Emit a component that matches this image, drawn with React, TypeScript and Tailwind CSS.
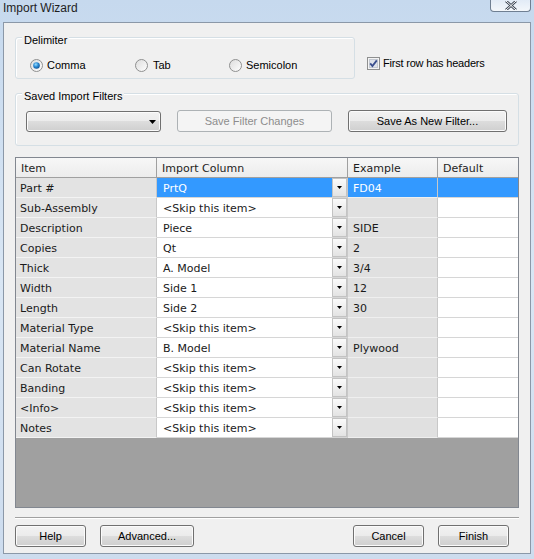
import React from "react";

const dlg = "font-['Liberation_Sans',Arial,sans-serif] text-[11px]";
const grid = "font-['DejaVu_Sans',Verdana,sans-serif] text-[11px]";

const rows: [string, string, string][] = [
    ["Part #", "PrtQ", "FD04"],
    ["Sub-Assembly", "<Skip this item>", ""],
    ["Description", "Piece", "SIDE"],
    ["Copies", "Qt", "2"],
    ["Thick", "A. Model", "3/4"],
    ["Width", "Side 1", "12"],
    ["Length", "Side 2", "30"],
    ["Material Type", "<Skip this item>", ""],
    ["Material Name", "B. Model", "Plywood"],
    ["Can Rotate", "<Skip this item>", ""],
    ["Banding", "<Skip this item>", ""],
    ["<Info>", "<Skip this item>", ""],
    ["Notes", "<Skip this item>", ""],
];

const btn =
    "flex items-center justify-center rounded-[3px] border border-[#707070] bg-[linear-gradient(#f2f2f2,#ebebeb_50%,#dddddd_50%,#cfcfcf)] shadow-[inset_0_0_0_1px_#fbfbfb] text-black";

function Radio({ checked }: { checked?: boolean }) {
    return (
        <svg width="13" height="13" viewBox="0 0 13 13">
            <defs>
                <linearGradient id="rb" x1="0" y1="0" x2="1" y2="1">
                    <stop offset="0" stopColor="#dcdcdc" />
                    <stop offset="1" stopColor="#ffffff" />
                </linearGradient>
                <radialGradient id="rd" cx="0.4" cy="0.35" r="0.7">
                    <stop offset="0" stopColor="#9be0ff" />
                    <stop offset="0.5" stopColor="#2a8ad4" />
                    <stop offset="1" stopColor="#0f4f8f" />
                </radialGradient>
            </defs>
            <circle cx="6.5" cy="6.5" r="6" fill="url(#rb)" stroke="#8e8f8f" />
            {checked && <circle cx="6.5" cy="6.5" r="3.3" fill="url(#rd)" />}
        </svg>
    );
}

function Check() {
    return (
        <svg width="13" height="13" viewBox="0 0 13 13">
            <rect x="0.5" y="0.5" width="12" height="12" fill="#f4f4f4" stroke="#8e8f8f" />
            <rect x="2.5" y="2.5" width="8" height="8" fill="#dfe3ea" stroke="#c4c9d2" />
            <path d="M3.2 6.4 L5.4 9 L9.8 3.4" fill="none" stroke="#3b4f8e" strokeWidth="1.8" />
        </svg>
    );
}

function Arrow() {
    return (
        <svg width="7" height="4" viewBox="0 0 7 4">
            <path d="M0 0 H7 L3.5 4 Z" fill="#000" />
        </svg>
    );
}

function DropBtn() {
    return (
        <div className="flex w-[15px] self-stretch items-center justify-center border border-[#c3c3c3] bg-linear-to-b from-[#fbfbfb] to-[#e3e3e3]">
            <svg width="5" height="3" viewBox="0 0 5 3">
                <path d="M0 0 H5 L2.5 3 Z" fill="#000" />
            </svg>
        </div>
    );
}

function Group({ label, className, children }: { label: string; className: string; children: React.ReactNode }) {
    return (
        <div className={`relative rounded-[3px] border border-[#d5dfe5] shadow-[inset_1px_1px_0_#ffffff] ${className}`}>
            <span className="absolute left-[6px] top-[-4px] bg-[#f0f0f0] px-[2px] leading-[13px] text-black">{label}</span>
            {children}
        </div>
    );
}

export default function App() {
    return (
        <div className={`flex h-[559px] w-[534px] flex-col bg-linear-to-b from-[#c6d9ee] via-[#d9e6f4] to-[#cddcee] ${dlg}`}>
            <div className="flex h-[22px] items-start justify-between pl-[3px]">
                <span className="text-[12px] leading-[16px] text-[#1e1e1e]">Import Wizard</span>
                <div className="mr-[3px] flex h-[12px] w-[41px] items-end justify-center rounded-b-[4px] border border-t-0 border-[#6f7f92] bg-linear-to-b from-[#e2ebf6] to-[#f3f7fb] pb-[1px]">
                    <svg width="12" height="9" viewBox="0 0 12 9">
                        <path d="M1 0 L11 9 M11 0 L1 9" stroke="#3c4654" strokeWidth="2.6" />
                        <path d="M1 0 L11 9 M11 0 L1 9" stroke="#ffffff" strokeWidth="1" />
                    </svg>
                </div>
            </div>

            <div className="mx-[3px] mb-[5px] flex flex-1 flex-col border border-[#8b98a8] bg-[#f0f0f0] px-[11px] pt-[14px]">
                <div className="flex items-start">
                    <Group label="Delimiter" className="h-[42px] w-[340px]">
                        <div className="flex items-center pl-[14px] pt-[21px] leading-[13px]">
                            <div className="flex w-[105px] items-center gap-[4px]">
                                <Radio checked />
                                <span>Comma</span>
                            </div>
                            <div className="flex w-[94px] items-center gap-[5px]">
                                <Radio />
                                <span>Tab</span>
                            </div>
                            <div className="flex items-center gap-[4px]">
                                <Radio />
                                <span>Semicolon</span>
                            </div>
                        </div>
                    </Group>
                    <div className="ml-[12px] mt-[20px] flex items-center gap-[3px] leading-[13px]">
                        <Check />
                        <span className="tracking-[-0.2px]">First row has headers</span>
                    </div>
                </div>

                <Group label="Saved Import Filters" className="mt-[14px] h-[53px] w-full">
                    <div className="flex items-start pl-[10px] pt-[16px]">
                        <div className={`${btn} mt-[1px] h-[21px] w-[135px] justify-end pr-[4px]`}>
                            <Arrow />
                        </div>
                        <div className="ml-[16px] flex h-[22px] w-[155px] items-center justify-center rounded-[3px] border border-[#adb2b5] bg-[#f4f4f4] text-[#8d8d8d]">
                            Save Filter Changes
                        </div>
                        <div className={`${btn} ml-[16px] h-[22px] w-[159px]`}>Save As New Filter...</div>
                    </div>
                </Group>

                <div className={`mt-[11px] flex h-[351px] flex-col border border-[#828790] bg-[#a0a0a0] ${grid}`}>
                    <div className="grid grid-cols-[141px_191px_90px_80px] text-[#1e1e1e]">
                        {["Item", "Import Column", "Example", "Default"].map((h, i) => (
                            <div
                                key={h}
                                className={`flex h-[20px] items-center border-b border-[#a0a0a0] bg-linear-to-b from-[#f7f7f7] to-[#ececec] pl-[5px] pt-[4px] ${
                                    i < 3 ? "border-r" : ""
                                }`}
                            >
                                {h}
                            </div>
                        ))}
                        {rows.map(([item, col, ex], r) => {
                            const sel = r === 0;
                            return (
                                <React.Fragment key={item}>
                                    <div className="flex h-[20px] items-center border-b border-r border-b-[#f3f3f3] border-r-[#c8c8c8] bg-[#e3e3e3] pl-[4px] pt-[4px] text-[#1a1a1a]">
                                        {item}
                                    </div>
                                    <div
                                        className={`flex h-[20px] items-stretch justify-between border-b border-r border-b-[#d6d6d6] border-r-[#c8c8c8] ${
                                            sel ? "bg-[#3399ff] text-white" : "bg-white text-[#1a1a1a]"
                                        }`}
                                    >
                                        <span className="flex items-center pl-[6px] pt-[4px]">{col}</span>
                                        <DropBtn />
                                    </div>
                                    <div
                                        className={`flex h-[20px] items-center border-b border-r border-b-[#efefef] border-r-[#c8c8c8] pl-[5px] pt-[4px] ${
                                            sel ? "bg-[#3399ff] text-white" : "bg-[#e0e0e0] text-[#1a1a1a]"
                                        }`}
                                    >
                                        {ex}
                                    </div>
                                    <div
                                        className={`h-[20px] border-b border-[#d6d6d6] ${sel ? "bg-[#3399ff]" : "bg-white"}`}
                                    />
                                </React.Fragment>
                            );
                        })}
                    </div>
                </div>

                <div className="mt-[9px] h-[2px] border-b border-t border-b-white border-t-[#a0a0a0]" />

                <div className="mt-[6px] flex justify-between pr-[10px]">
                    <div className="flex gap-[14px]">
                        <div className={`${btn} h-[22px] w-[71px]`}>Help</div>
                        <div className={`${btn} h-[22px] w-[94px]`}>Advanced...</div>
                    </div>
                    <div className="flex gap-[14px]">
                        <div className={`${btn} h-[22px] w-[71px]`}>Cancel</div>
                        <div className={`${btn} h-[22px] w-[71px]`}>Finish</div>
                    </div>
                </div>
            </div>
        </div>
    );
}
